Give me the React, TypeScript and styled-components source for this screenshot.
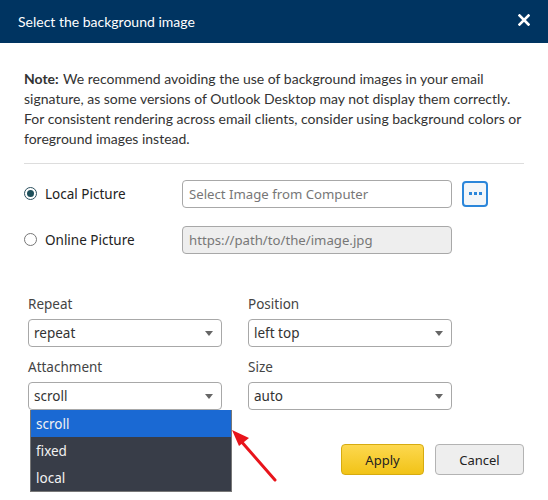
import React from "react";
import styled, { createGlobalStyle } from "styled-components";

const Global = createGlobalStyle`
  html, body { margin: 0; padding: 0; background: #fff; }
  body { font-family: "Lato", "Noto Sans", sans-serif; }
  * { box-sizing: border-box; }
`;

const Dialog = styled.div`
  width: 548px;
  height: 500px;
  background: #fff;
  position: relative;
  overflow: hidden;
`;

const Header = styled.div`
  height: 43px;
  background: #003461;
  display: flex;
  align-items: center;
  justify-content: space-between;
  padding: 0 18px 0 18px;
`;

const Title = styled.div`
  color: #fff;
  font-family: "Lato", sans-serif;
  font-size: 14px;
  margin-top: -1px;
`;

const Close = styled.div`
  width: 12px;
  height: 12px;
  margin-top: -3px;
  display: flex;
`;

const Body = styled.div`
  padding: 0 24px;
`;

const Note = styled.p`
  margin: 0;
  padding-top: 26px;
  font-family: "Lato", sans-serif;
  font-size: 14px;
  line-height: 20px;
  color: #333;
  padding-bottom: 14px;
  border-bottom: 1px solid #ddd;
`;

const Strong = styled.span`
  font-weight: 700;
  margin-right: 1px;
`;

const Sources = styled.div`
  display: flex;
  flex-direction: column;
  gap: 19px;
  padding-top: 16px;
`;

const SourceRow = styled.div`
  display: flex;
  align-items: center;
  height: 27px;
`;

const RadioLabel = styled.label`
  width: 158px;
  display: flex;
  align-items: center;
  gap: 8px;
  font-family: "Segoe UI", "Noto Sans", sans-serif;
  font-size: 13.5px;
  color: #222;
`;

const Radio = styled.span<{ $checked?: boolean }>`
  width: 13px;
  height: 13px;
  border-radius: 50%;
  border: 1px solid ${(p) => (p.$checked ? "#2b4f5e" : "#777")};
  background: #fff;
  display: flex;
  align-items: center;
  justify-content: center;
  &::after {
    content: "";
    width: 7px;
    height: 7px;
    border-radius: 50%;
    background: ${(p) => (p.$checked ? "#1e4f5a" : "transparent")};
  }
`;

const TextBox = styled.div<{ $disabled?: boolean }>`
  width: 270px;
  height: 28px;
  border: 1px solid #a8a8a8;
  border-radius: 4px;
  background: ${(p) => (p.$disabled ? "#eee" : "#fff")};
  color: #777;
  font-family: "Segoe UI", "Noto Sans", sans-serif;
  font-size: 13.2px;
  display: flex;
  align-items: center;
  padding-left: 6px;
`;

const BrowseButton = styled.div`
  width: 26px;
  height: 26px;
  margin-left: 10px;
  border: 2px solid #2b86da;
  border-radius: 4px;
  background: #f3f6f9;
  display: flex;
  align-items: center;
  justify-content: center;
  gap: 2px;
`;

const Dot = styled.span`
  width: 3px;
  height: 3px;
  background: #2b86da;
`;

const Grid = styled.div`
  display: grid;
  grid-template-columns: 194px 204px;
  column-gap: 26px;
  row-gap: 11px;
  padding: 42px 0 0 4px;
`;

const Field = styled.div`
  display: flex;
  flex-direction: column;
  gap: 5px;
  position: relative;
`;

const FieldLabel = styled.div`
  font-family: "Segoe UI", "Noto Sans", sans-serif;
  font-size: 13.5px;
  color: #444;
  height: 19px;
  line-height: 19px;
`;

const Select = styled.div`
  height: 28px;
  border: 1px solid #a8a8a8;
  border-radius: 4px;
  background: #fff;
  display: flex;
  align-items: center;
  justify-content: space-between;
  padding: 0 8px 0 5px;
  font-family: "Segoe UI", "Noto Sans", sans-serif;
  font-size: 13.5px;
  color: #333;
`;

const Caret = styled.span`
  width: 0;
  height: 0;
  border-left: 4px solid transparent;
  border-right: 4px solid transparent;
  border-top: 5px solid #666;
  margin-top: 1px;
`;

const Menu = styled.div`
  position: absolute;
  top: 52px;
  left: 2px;
  width: 202px;
  background: #383d48;
  border: 1px solid #777;
  border-top: none;
  z-index: 2;
`;

const Option = styled.div<{ $active?: boolean }>`
  height: 27px;
  display: flex;
  align-items: center;
  padding-left: 5px;
  background: ${(p) => (p.$active ? "#1a69d3" : "transparent")};
  color: #f2f2f2;
  font-family: "Segoe UI", "Noto Sans", sans-serif;
  font-size: 13.5px;
`;

const Footer = styled.div`
  display: flex;
  justify-content: flex-end;
  gap: 11px;
  padding: 34px 0 0 0;
`;

const Button = styled.div<{ $primary?: boolean }>`
  height: 31px;
  width: ${(p) => (p.$primary ? "83px" : "89px")};
  border-radius: 4px;
  border: 1px solid ${(p) => (p.$primary ? "#d6ab10" : "#b3b3b3")};
  background: ${(p) =>
    p.$primary ? "linear-gradient(#fdd84f, #f1c317)" : "#eeeeee"};
  color: #222;
  font-family: "Segoe UI", "Noto Sans", sans-serif;
  font-size: 13px;
  display: flex;
  align-items: center;
  justify-content: center;
`;

const Arrow = styled.svg`
  position: absolute;
  left: 228px;
  top: 424px;
  z-index: 3;
`;

export default function App() {
  return (
    <>
      <Global />
      <Dialog>
        <Header>
          <Title>Select the background image</Title>
          <Close>
            <svg width="12" height="12" viewBox="0 0 12 12">
              <path d="M1.5 1.5 L10.5 10.5 M10.5 1.5 L1.5 10.5" stroke="#fff" strokeWidth="2.6" strokeLinecap="square" />
            </svg>
          </Close>
        </Header>
        <Body>
          <Note>
            <Strong>Note:</Strong> We recommend avoiding the use of background images in your email
            signature, as some versions of Outlook Desktop may not display them correctly.
            For consistent rendering across email clients, consider using background colors or
            foreground images instead.
          </Note>
          <Sources>
            <SourceRow>
              <RadioLabel>
                <Radio $checked />
                Local Picture
              </RadioLabel>
              <TextBox>Select Image from Computer</TextBox>
              <BrowseButton>
                <Dot />
                <Dot />
                <Dot />
              </BrowseButton>
            </SourceRow>
            <SourceRow>
              <RadioLabel>
                <Radio />
                Online Picture
              </RadioLabel>
              <TextBox $disabled>https://path/to/the/image.jpg</TextBox>
            </SourceRow>
          </Sources>
          <Grid>
            <Field>
              <FieldLabel>Repeat</FieldLabel>
              <Select>
                repeat
                <Caret />
              </Select>
            </Field>
            <Field>
              <FieldLabel>Position</FieldLabel>
              <Select>
                left top
                <Caret />
              </Select>
            </Field>
            <Field>
              <FieldLabel>Attachment</FieldLabel>
              <Select>
                scroll
                <Caret />
              </Select>
              <Menu>
                <Option $active>scroll</Option>
                <Option>fixed</Option>
                <Option>local</Option>
              </Menu>
            </Field>
            <Field>
              <FieldLabel>Size</FieldLabel>
              <Select>
                auto
                <Caret />
              </Select>
            </Field>
          </Grid>
          <Footer>
            <Button $primary>Apply</Button>
            <Button>Cancel</Button>
          </Footer>
        </Body>
        <Arrow width="52" height="60" viewBox="0 0 52 60">
          <path d="M47 56 L12 16" stroke="#e8141b" strokeWidth="3" strokeLinecap="round" />
          <path d="M4 6 L21 14 L11 22 Z" fill="#e8141b" />
        </Arrow>
      </Dialog>
    </>
  );
}
